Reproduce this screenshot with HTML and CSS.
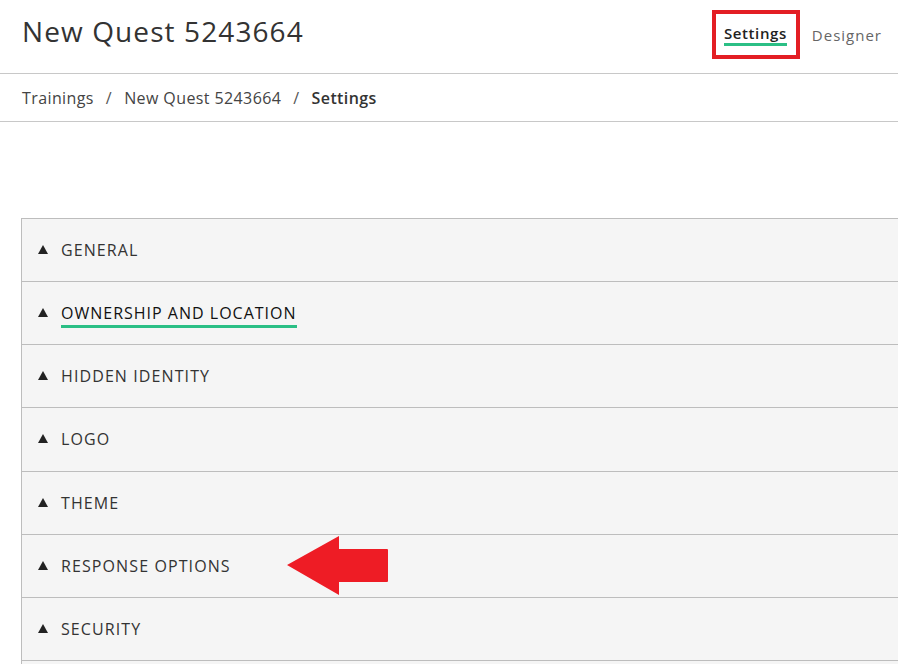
FILE: index.html
```html
<!DOCTYPE html>
<html lang="en">
<head>
    <meta charset="UTF-8">
    <title>New Quest 5243664 - Settings</title>
    <link rel="stylesheet" href="styles.css">
</head>
<body>

    <header class="top">
        <h1>New Quest 5243664</h1>
        <nav class="tabs">
            <a class="tab active" href="#">Settings</a>
            <a class="tab" href="#">Designer</a>
        </nav>
    </header>

    <div class="crumbs">
        <a href="#">Trainings</a>
        <span class="sep">/</span>
        <a href="#">New Quest 5243664</a>
        <span class="sep">/</span>
        <strong>Settings</strong>
    </div>

    <div class="sections">
        <div class="section"><span class="caret"></span><span class="label">GENERAL</span></div>
        <div class="section"><span class="caret"></span><span class="label focused">OWNERSHIP AND LOCATION</span></div>
        <div class="section"><span class="caret"></span><span class="label">HIDDEN IDENTITY</span></div>
        <div class="section"><span class="caret"></span><span class="label">LOGO</span></div>
        <div class="section"><span class="caret"></span><span class="label">THEME</span></div>
        <div class="section">
            <span class="caret"></span><span class="label">RESPONSE OPTIONS</span>
            <!-- annotation arrow -->
            <svg class="arrow" width="104" height="60" viewBox="0 0 104 60">
                <path d="M0 29 L52 0 L52 13 L100 13 Q101 13 101 14 L101 45 Q101 46 100 46 L52 46 L52 59 Z" fill="#ee1c25"/>
            </svg>
        </div>
        <div class="section"><span class="caret"></span><span class="label">SECURITY</span></div>
        <div class="section last"></div>
    </div>

</body>
</html>
```

FILE: styles.css
```css
body {
    margin: 0;
    font-family: 'Open Sans', 'Liberation Sans', sans-serif;
    color: #333;
    background: #fff;
    overflow: hidden;
}
a {
    color: inherit;
    text-decoration: none;
}
.top {
    height: 73px;
    display: flex;
    align-items: center;
    justify-content: space-between;
    padding: 0 16px 0 22px;
    border-bottom: 1px solid #c8c8c8;
}
h1 {
    margin: 0 0 12px;
    font-size: 28px;
    font-weight: 400;
    letter-spacing: 1.1px;
    color: #333;
}
.tabs {
    display: flex;
    align-items: center;
    gap: 12px;
    margin-top: -4px;
}
.tab {
    font-size: 15px;
    color: #666;
    letter-spacing: 1px;
}
.tab.active {
    color: #222;
    font-weight: 600;
    letter-spacing: 0.6px;
    border: 4px solid #e31e24;
    padding: 9px 9px 12px 8px;
    position: relative;
}
.tab.active::after {
    content: "";
    position: absolute;
    left: 8px;
    right: 9px;
    bottom: 9px;
    height: 3px;
    background: #2bbf85;
}
.crumbs {
    height: 47px;
    display: flex;
    align-items: center;
    padding-left: 22px;
    font-size: 16px;
    color: #444;
    border-bottom: 1px solid #c8c8c8;
    letter-spacing: 0.4px;
}
.crumbs .sep {
    margin: 0 12px;
    color: #555;
}
.crumbs strong {
    font-weight: 600;
    color: #333;
}
.sections {
    margin: 96px 0 0 21px;
    border-left: 1px solid #bdbdbd;
    border-top: 1px solid #bdbdbd;
}
.section {
    height: 62.15px;
    display: flex;
    align-items: center;
    padding-left: 16px;
    background: #f5f5f5;
    border-bottom: 1px solid #bdbdbd;
    position: relative;
}
.caret {
    width: 0;
    height: 0;
    border-left: 5px solid transparent;
    border-right: 5px solid transparent;
    border-bottom: 9px solid #222;
    margin-right: 13px;
    margin-bottom: 1px;
}
.label {
    font-size: 16px;
    letter-spacing: 1.1px;
    color: #333;
}
.label.focused {
    color: #111;
    letter-spacing: 1px;
    border-bottom: 3px solid #2bbf85;
    padding-bottom: 1px;
    margin-top: 4px;
}
.arrow {
    position: absolute;
    left: 265px;
    top: 1px;
}
```
